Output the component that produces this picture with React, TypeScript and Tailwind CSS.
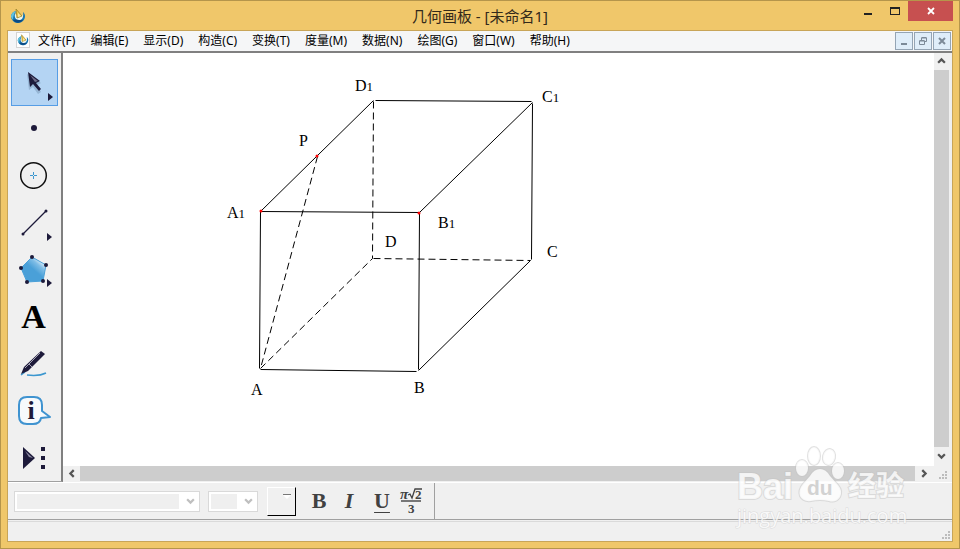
import type { ReactNode } from "react";

type ToolProps = {
  label: string;
  active?: boolean;
  more?: boolean;
  children: ReactNode;
};

const menus = [
  "文件(F)",
  "编辑(E)",
  "显示(D)",
  "构造(C)",
  "变换(T)",
  "度量(M)",
  "数据(N)",
  "绘图(G)",
  "窗口(W)",
  "帮助(H)",
];

const solidLines = [
  [197, 158, 356, 159],
  [197, 158, 310, 47],
  [312, 47, 468, 48],
  [356, 159, 469, 49],
  [197, 158, 196, 315],
  [356, 160, 355, 316],
  [469, 50, 468, 206],
  [197, 316, 353, 318],
  [355, 317, 467, 207],
];

const dashedLines = [
  [310, 48, 309, 205],
  [310, 205, 467, 207],
  [197, 315, 309, 205],
  [254, 103, 197, 315],
];

const labels = [
  { name: "D", sub: "1", x: 292, y: 38 },
  { name: "C", sub: "1", x: 479, y: 49 },
  { name: "P", sub: "", x: 236, y: 93 },
  { name: "A", sub: "1", x: 164, y: 165 },
  { name: "B", sub: "1", x: 375, y: 175 },
  { name: "D", sub: "", x: 322, y: 194 },
  { name: "C", sub: "", x: 484, y: 204 },
  { name: "A", sub: "", x: 188, y: 342 },
  { name: "B", sub: "", x: 351, y: 340 },
];

const AppLogo = ({ className }: { className: string }) => (
  <svg viewBox="0 0 16 16" className={className} aria-hidden="true">
    <path d="M6 3C2 4 1 7 1 9c1 5 5 6 7 6 4 0 7-3 7-7 0-2-1-3-2-4 1 5-1 7-4 7S4 8 6 3z" fill="#1577b4" />
    <path d="M6 3C2 4 1 7 1 9l2 3c0-4 1-6 3-9z" fill="#63c3de" />
    <path d="M3 12c2 3 7 4 10 0l-4-1z" fill="#0b4a84" />
    <path d="M5 6c-1 3 1 6 4 6s4-2 4-5l-3 2z" fill="#eef5ee" />
    <path d="M6 1l1 9 5-2z" fill="#efc544" stroke="#97842f" strokeWidth="0.8" />
    <path d="M8 5v4l3-1z" fill="#f6e6a4" />
  </svg>
);

const Tool = ({ label, active, more, children }: ToolProps) => (
  <button
    type="button"
    aria-label={label}
    className={
      active
        ? "relative flex h-[47px] w-[47px] items-center justify-center border border-[#569de5] bg-[#b4d4f3]"
        : "relative flex h-[47px] w-[47px] items-center justify-center pr-[2px] pb-[2px]"
    }
  >
    {children}
    {more && (
      <svg
        viewBox="0 0 5 8"
        className={
          active
            ? "absolute right-1 bottom-1 h-2 w-[5px]"
            : "absolute right-[6px] bottom-[6px] h-2 w-[5px]"
        }
        aria-hidden="true"
      >
        <path d="M0 0l5 4-5 4z" fill="#1d1a3a" />
      </svg>
    )}
  </button>
);

const Toolbox = () => (
  <div className="flex w-[55px] shrink-0 flex-col border-r-2 border-b border-r-[#808080] border-b-[#a0a0a0] pt-[6px] pl-[3px]">
    <Tool label="移动箭头工具" active more>
      <svg viewBox="0 0 45 45" className="absolute inset-0 h-full w-full">
        <path
          d="M15 14l2 16 4-3 5 7 3-2-4-7 4-2z"
          fill="#1d3a5a"
          opacity="0.2"
        />
        <path d="M16 12l2 15 3-3 6 7 2-2-5-6 4-2z" fill="#1d1a3a" />
        <path d="M18 15l8 6-3 1z" fill="#6f6d88" />
      </svg>
    </Tool>
    <Tool label="点工具">
      <svg viewBox="0 0 6 6" className="h-[6px] w-[6px]">
        <circle cx="3" cy="3" r="3" fill="#1d1a3a" />
      </svg>
    </Tool>
    <Tool label="圆工具">
      <svg viewBox="0 0 28 28" className="h-7 w-7" fill="none">
        <circle cx="13.5" cy="14.5" r="12.8" stroke="#111" strokeWidth="1.5" />
        <path d="M10 14.500h3m1 0h3M13.500 11v3m0 1v3" stroke="#3c97cf" />
      </svg>
    </Tool>
    <Tool label="线段直尺工具" more>
      <svg viewBox="0 0 28 28" className="h-7 w-7">
        <path d="M3 26L26 3" stroke="#1d1a3a" strokeWidth="1.3" />
        <circle cx="3" cy="26" r="1.5" fill="#1d1a3a" />
        <circle cx="26" cy="3" r="1.5" fill="#1d1a3a" />
      </svg>
    </Tool>
    <Tool label="多边形工具" more>
      <svg viewBox="0 0 30 30" className="h-[30px] w-[30px]">
        <defs>
          <linearGradient id="poly" x1="0.85" y1="0.1" x2="0.5" y2="0.5">
            <stop offset="0" stopColor="#fff" />
            <stop offset="0.5" stopColor="#7fbde6" />
            <stop offset="1" stopColor="#4aa0d8" />
          </linearGradient>
        </defs>
        <path
          d="M13 3l14 8-3 16-16 1L2 14z"
          fill="url(#poly)"
          stroke="#4aa0d8"
        />
        <g fill="#1d1a3a">
          <circle cx="13" cy="3" r="2" />
          <circle cx="27" cy="11" r="2" />
          <circle cx="24" cy="27" r="2" />
          <circle cx="8" cy="28" r="2" />
          <circle cx="2" cy="14" r="2" />
        </g>
      </svg>
    </Tool>
    <Tool label="文本工具">
      <span className="pt-[2px] font-['Liberation_Serif',serif] text-[34px] leading-9 font-bold">
        A
      </span>
    </Tool>
    <Tool label="标记工具">
      <svg viewBox="0 0 28 28" className="h-7 w-7" fill="none">
        <path d="M1 26l4-3m2 3c8 1 13 1 19-2" stroke="#3c97cf" strokeWidth="1.5" />
        <path d="M1 25l3-7L21 2l4 3L8 22z" fill="#1d1a3a" />
        <path d="M5 19L20 4M9 15l3 3" stroke="#a5a3b5" />
      </svg>
    </Tool>
    <Tool label="信息工具">
      <svg viewBox="0 0 34 30" className="h-[30px] w-[34px]">
        <path
          d="M10 2h7q8 0 8 8v6l8 6-9 1q-1 6-8 6h-6q-8 0-8-8V10q0-8 8-8z"
          fill="#f7fafc"
          stroke="#3f93d0"
          strokeWidth="2"
          strokeLinejoin="round"
        />
        <text
          x="14"
          y="24"
          textAnchor="middle"
          fill="#1d1a3a"
          className="font-['Liberation_Serif',serif] text-[26px] font-bold"
        >
          i
        </text>
      </svg>
    </Tool>
    <Tool label="自定义工具">
      <svg viewBox="0 0 24 24" className="h-6 w-6">
        <path d="M1 2l12 11L1 24z" fill="#1d1a3a" />
        <path d="M3 6l8 7-4-1z" fill="#8d8ba4" />
        <path d="M19 2h4v4h-4zM19 11h4v4h-4zM19 20h4v4h-4z" fill="#1d1a3a" />
      </svg>
    </Tool>
  </div>
);

const Sketch = () => (
  <svg className="min-h-0 min-w-0 flex-1 bg-white" aria-label="长方体">
    <g transform="translate(.5 .5)" stroke="#000">
      {solidLines.map(([x1, y1, x2, y2], i) => (
        <line key={i} x1={x1} y1={y1} x2={x2} y2={y2} />
      ))}
      {dashedLines.map(([x1, y1, x2, y2], i) => (
        <line key={i} x1={x1} y1={y1} x2={x2} y2={y2} strokeDasharray="7 4" />
      ))}
    </g>
    <g fill="#f00">
      <circle cx="198" cy="158" r="1.5" />
      <circle cx="356" cy="160" r="1.5" />
      <circle cx="254" cy="103" r="1.5" />
    </g>
    <g className="font-['Liberation_Serif',serif] text-base">
      {labels.map((label) => (
        <text key={label.name + label.sub} x={label.x} y={label.y}>
          {label.name}
          <tspan className="text-[13px]">{label.sub}</tspan>
        </text>
      ))}
    </g>
  </svg>
);

const arrows = {
  up: "M1 6l3-3 3 3",
  down: "M1 2l3 3 3-3",
  left: "M6 1L3 4l3 3",
  right: "M2 1l3 3-3 3",
};

const Arrow = ({ dir, color }: { dir: keyof typeof arrows; color: string }) => (
  <svg viewBox="0 0 8 8" className="h-[9px] w-[9px]" fill="none" aria-hidden="true">
    <path d={arrows[dir]} stroke={color} strokeWidth="2" />
  </svg>
);

const Grip = () => (
  <svg viewBox="0 0 8 8" className="h-2 w-2" fill="#bcbcbc" aria-hidden="true">
    <path d="M6 0h2v2H6zM3 3h2v2H3zM6 3h2v2H6zM0 6h2v2H0zM3 6h2v2H3zM6 6h2v2H6z" />
  </svg>
);

const ScrollButton = ({ dir, label }: { dir: keyof typeof arrows; label: string }) => (
  <button
    type="button"
    aria-label={label}
    className="flex h-[15px] w-[17px] shrink-0 items-center justify-center"
  >
    <Arrow dir={dir} color="#555" />
  </button>
);

const FormatBar = () => (
  <div className="flex h-[38px] shrink-0 items-center border-t border-b border-t-white border-b-[#a0a0a0]">
    <div className="flex h-full w-[427px] items-center border-r border-[#a0a0a0] pl-[6px]">
      <div className="flex h-[21px] w-[186px] items-center border border-[#d9d9d9] bg-white p-[2px]">
        <select
          aria-label="字体"
          disabled
          className="h-full min-w-0 flex-1 appearance-none bg-[#efefef]"
        />
        <span className="flex w-[18px] justify-end pr-[2px]">
          <Arrow dir="down" color="#bfbfbf" />
        </span>
      </div>
      <div className="ml-2 flex h-[21px] w-[50px] items-center border border-[#d9d9d9] bg-white p-[2px]">
        <select
          aria-label="字号"
          disabled
          className="h-full min-w-0 flex-1 appearance-none bg-[#efefef]"
        />
        <span className="flex w-[18px] justify-end pr-[2px]">
          <Arrow dir="down" color="#bfbfbf" />
        </span>
      </div>
      <button
        type="button"
        aria-label="颜色"
        className="ml-[9px] flex h-[29px] w-[29px] justify-end border border-t-white border-r-black border-b-black border-l-white pt-[6px] pr-1"
      >
        <svg viewBox="0 0 8 6" className="h-[6px] w-2">
          <path d="M0 1h8L4 5z" fill="#fff" />
          <path d="M0 0h8v1H0z" fill="#777" />
        </svg>
      </button>
      <div className="ml-2 flex items-center font-['Liberation_Serif',serif] text-[22px] leading-7 text-[#414141]">
        <button type="button" aria-label="粗体" className="w-[30px] font-bold">
          B
        </button>
        <button type="button" aria-label="斜体" className="w-[30px] font-bold italic">
          I
        </button>
        <button
          type="button"
          aria-label="下划线"
          className="ml-[3px] w-[30px] font-bold underline decoration-1 underline-offset-4"
        >
          U
        </button>
        <button type="button" aria-label="数学格式" className="w-[30px]">
          <svg viewBox="0 0 30 32" className="h-8 w-[30px]" fill="#414141">
            <text x="3" y="14" className="text-[15px] font-bold italic">
              π
            </text>
            <text x="18" y="14" className="text-[13px] font-bold">
              2
            </text>
            <path
              d="M11 10l2-1 2 4 3-9h7"
              fill="none"
              stroke="#414141"
              strokeWidth="1.3"
            />
            <path d="M4 16h20" stroke="#777" strokeWidth="2" />
            <text x="11" y="28" className="text-[13px] font-bold">
              3
            </text>
          </svg>
        </button>
      </div>
    </div>
  </div>
);

const Watermark = () => (
  <svg
    viewBox="0 0 180 90"
    className="pointer-events-none absolute right-[46px] bottom-[16px] h-[90px] w-[180px]"
    aria-hidden="true"
  >
    <g
      fill="#fff"
      fillOpacity="0.8"
      stroke="#c4c4c4"
      strokeOpacity="0.5"
      strokeWidth="2"
      paintOrder="stroke"
      className="font-['Liberation_Sans','Noto_Sans_CJK_SC',sans-serif]"
    >
      <text x="4" y="57" className="text-[36px] font-bold">
        Bai
      </text>
      <ellipse cx="81" cy="14" rx="6" ry="9" />
      <ellipse cx="96" cy="15" rx="6" ry="8" transform="rotate(12 96 15)" />
      <ellipse cx="69" cy="26" rx="6" ry="8" />
      <ellipse cx="105" cy="29" rx="6" ry="8" />
      <path d="M87 27q6 0 10 7l8 9q5 6 2 12-4 6-11 4-9-2-18 0-8 1-11-5-2-6 3-12l7-8q4-7 10-7z" />
      <text x="115" y="54" className="text-[28px] font-bold">
        经验
      </text>
      <text
        x="4"
        y="81"
        strokeWidth="1"
        className="font-['Open_Sans',sans-serif] text-[20px]"
      >
        jingyan.baidu.com
      </text>
    </g>
    <text
      x="74"
      y="53"
      fill="#d2d2d2"
      className="font-['Liberation_Sans',sans-serif] text-[21px] font-bold"
    >
      du
    </text>
  </svg>
);

const App = () => {
  return (
    <div className="relative flex h-screen flex-col border border-[#b5954b] bg-[#f0c76a] px-[6px] pb-[6px] font-['Noto_Sans','Noto_Sans_CJK_SC',sans-serif]">
      <header className="grid h-[29px] shrink-0 grid-cols-[1fr_auto_1fr] items-center">
        <AppLogo className="ml-[3px] h-4 w-4" />
        <h1 className="text-[15px] leading-5 text-[#33291a]">
          几何画板 - [未命名1]
        </h1>
        <div className="flex justify-end self-start">
          <button
            type="button"
            aria-label="最小化"
            className="flex h-5 w-[27px] items-end justify-center pb-[6px]"
          >
            <span className="h-[2px] w-2 bg-[#222]" />
          </button>
          <button
            type="button"
            aria-label="最大化"
            className="flex h-5 w-[27px] items-center justify-center"
          >
            <span className="h-2 w-[10px] border border-t-2 border-[#222]" />
          </button>
          <button
            type="button"
            aria-label="关闭"
            className="flex h-5 w-[45px] items-center justify-center bg-[#c75050]"
          >
            <svg viewBox="0 0 8 8" className="h-2 w-2">
              <path d="M1 1l6 6M7 1L1 7" stroke="#fff" strokeWidth="1.8" />
            </svg>
          </button>
        </div>
      </header>

      <div className="flex min-h-0 flex-1 flex-col border border-[#c8a558] bg-[#f0f0f0]">
        <nav className="flex h-[22px] shrink-0 border-b-2 border-[#808080] bg-[#f5f6f7]">
          <span className="mt-[1px] ml-2 flex h-4 w-[14px] items-center justify-center border border-[#d4d4d4] bg-white">
            <AppLogo className="h-3 w-3" />
          </span>
          <div className="ml-[1px] flex items-center gap-[1px]">
            {menus.map((menu) => (
              <button
                key={menu}
                type="button"
                className="px-[7px] text-xs leading-4 whitespace-nowrap text-black"
              >
                {menu}
              </button>
            ))}
          </div>
          <div className="mt-[1px] mr-[1px] ml-auto flex gap-[1px] text-[#7c8a98]">
            <button
              type="button"
              aria-label="最小化文档"
              className="flex h-[18px] w-[18px] items-end justify-center border border-[#94a4b4] bg-[#dfedf9] pb-1"
            >
              <span className="h-[2px] w-[6px] bg-[#7c8a98]" />
            </button>
            <button
              type="button"
              aria-label="还原文档"
              className="flex h-[18px] w-[18px] items-center justify-center border border-[#94a4b4] bg-[#dfedf9]"
            >
              <svg viewBox="0 0 8 8" className="h-2 w-2" fill="none" stroke="currentColor">
                <path d="M2.5 3V1h5v3.500H6M.5 4h5v3.500h-5zM2.500 .5h5M.5 3.500h5" />
              </svg>
            </button>
            <button
              type="button"
              aria-label="关闭文档"
              className="flex h-[18px] w-[18px] items-center justify-center border border-[#94a4b4] bg-[#dfedf9]"
            >
              <svg viewBox="0 0 8 8" className="h-2 w-2">
                <path d="M1 1l6 6M7 1L1 7" stroke="currentColor" strokeWidth="2" />
              </svg>
            </button>
          </div>
        </nav>

        <div className="flex min-h-0 flex-1">
          <Toolbox />
          <main className="flex min-w-0 flex-1 flex-col pr-[3px] pb-[1px]">
            <div className="flex min-h-0 flex-1">
              <Sketch />
              <div className="flex w-[15px] shrink-0 flex-col items-center">
                <ScrollButton dir="up" label="向上滚动" />
                <div className="mt-[2px] w-full flex-1 bg-[#cdcdcd]" />
                <div className="flex h-[19px] items-center">
                  <ScrollButton dir="down" label="向下滚动" />
                </div>
              </div>
            </div>
            <div className="flex h-[15px] shrink-0">
              <ScrollButton dir="left" label="向左滚动" />
              <div className="flex-1 bg-[#cdcdcd]" />
              <div className="flex w-[19px] justify-center">
                <ScrollButton dir="right" label="向右滚动" />
              </div>
              <div className="flex w-[15px] items-end justify-end pr-[2px] pb-[2px]">
                <Grip />
              </div>
            </div>
          </main>
        </div>

        <FormatBar />
        <footer className="mt-[1px] flex h-5 shrink-0 items-end justify-end border-t border-[#dadada] pr-[2px] pb-[2px]">
          <Grip />
        </footer>
      </div>

      <Watermark />
    </div>
  );
};

export default App;
